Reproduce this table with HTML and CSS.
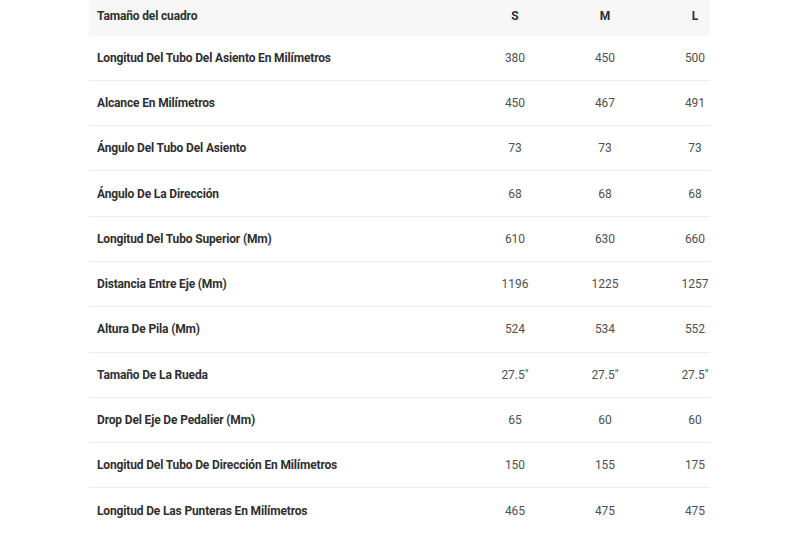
FILE: index.html
```html
<!DOCTYPE html>
<html lang="es">
<head>
<meta charset="utf-8">
<link rel="stylesheet" href="styles.css">
</head>
<body>
<div class="table">
  <div class="row head">
    <div class="label">Tamaño del cuadro</div>
    <div class="val"><span>S</span></div>
    <div class="val"><span>M</span></div>
    <div class="val"><span>L</span></div>
  </div>
  <div class="row"><div class="label">Longitud Del Tubo Del Asiento En Milímetros</div><div class="val"><span>380</span></div><div class="val"><span>450</span></div><div class="val"><span>500</span></div></div>
  <div class="row"><div class="label">Alcance En Milímetros</div><div class="val"><span>450</span></div><div class="val"><span>467</span></div><div class="val"><span>491</span></div></div>
  <div class="row"><div class="label">Ángulo Del Tubo Del Asiento</div><div class="val"><span>73</span></div><div class="val"><span>73</span></div><div class="val"><span>73</span></div></div>
  <div class="row"><div class="label">Ángulo De La Dirección</div><div class="val"><span>68</span></div><div class="val"><span>68</span></div><div class="val"><span>68</span></div></div>
  <div class="row"><div class="label">Longitud Del Tubo Superior (Mm)</div><div class="val"><span>610</span></div><div class="val"><span>630</span></div><div class="val"><span>660</span></div></div>
  <div class="row"><div class="label">Distancia Entre Eje (Mm)</div><div class="val"><span>1196</span></div><div class="val"><span>1225</span></div><div class="val"><span>1257</span></div></div>
  <div class="row"><div class="label">Altura De Pila (Mm)</div><div class="val"><span>524</span></div><div class="val"><span>534</span></div><div class="val"><span>552</span></div></div>
  <div class="row"><div class="label">Tamaño De La Rueda</div><div class="val"><span>27.5"</span></div><div class="val"><span>27.5"</span></div><div class="val"><span>27.5"</span></div></div>
  <div class="row"><div class="label">Drop Del Eje De Pedalier (Mm)</div><div class="val"><span>65</span></div><div class="val"><span>60</span></div><div class="val"><span>60</span></div></div>
  <div class="row"><div class="label">Longitud Del Tubo De Dirección En Milímetros</div><div class="val"><span>150</span></div><div class="val"><span>155</span></div><div class="val"><span>175</span></div></div>
  <div class="row last"><div class="label">Longitud De Las Punteras En Milímetros</div><div class="val"><span>465</span></div><div class="val"><span>475</span></div><div class="val"><span>475</span></div></div>
</div>
</body>
</html>
```
FILE: styles.css
```css
html, body {
  margin: 0;
  padding: 0;
  background: #fff;
}
body {
  font-family: Roboto, "Liberation Sans", sans-serif;
  font-size: 12px;
  color: #333;
}
.table {
  width: 621px;
  margin-left: 89px;
  margin-top: -4px;
}
.row {
  display: grid;
  grid-template-columns: 381px 90px 90px 60px;
  height: 44.3px;
  align-items: center;
  border-bottom: 1px solid #ebebeb;
}
.row.head {
  height: 39.5px;
  background: #f7f7f7;
  border-bottom: none;
}
.row.last {
  border-bottom: none;
}
.label {
  padding-left: 8px;
  font-weight: 700;
  letter-spacing: -0.15px;
  color: #2f2f2f;
}
.val {
  position: relative;
  height: 100%;
}
.val span {
  position: absolute;
  left: 0;
  top: 50%;
  transform: translateY(-50%);
  width: 90px;
  text-align: center;
  color: #505050;
}
.head .val span {
  font-weight: 700;
  color: #2f2f2f;
}
```
